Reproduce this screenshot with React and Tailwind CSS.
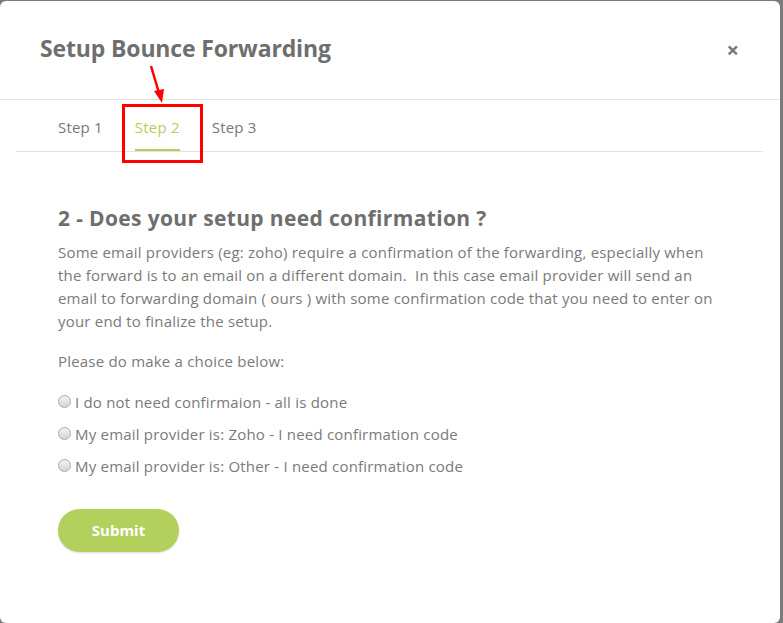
import React, { useState } from "react";

const options = [
  "I do not need confirmaion - all is done",
  "My email provider is: Zoho - I need confirmation code",
  "My email provider is: Other - I need confirmation code",
];

export default function App() {
  const [choice, setChoice] = useState(null);

  return (
    <div className="w-[783px] h-[623px] bg-[#7b7b7b] pt-[1px] pr-[3px] overflow-hidden" style={{ fontFamily: '"Open Sans", sans-serif' }}>
      <div className="relative w-[780px] h-[622px] bg-white rounded-md">
        {/* header */}
        <div className="h-[99px] flex items-center justify-between pl-[40px] pr-[41px] border-b border-[#e3e3e3]">
          <h2 className="text-[23px] font-bold text-[#6e6e6e] tracking-[-0.15px] mt-[-3px]">
            Setup Bounce Forwarding
          </h2>
          <button className="text-[22px] leading-none font-bold text-[#777] mt-[-2px]">×</button>
        </div>

        {/* tabs */}
        <div className="ml-[16px] mr-[17px] border-b border-[#e3e3e3] flex gap-[32px] pl-[42px] h-[52px]">
          <div className="flex items-center text-[15px] tracking-[0.2px] text-[#777] border-b-2 border-transparent pt-[5px]">Step 1</div>
          <div className="flex items-center text-[15px] tracking-[0.2px] text-[#b3cf5b] border-b-[2px] border-[#b3cf5b] pt-[5px]">Step 2</div>
          <div className="flex items-center text-[15px] tracking-[0.2px] text-[#777] border-b-2 border-transparent pt-[5px]">Step 3</div>
        </div>

        {/* body */}
        <div className="px-[58px] pt-[53px]">
          <h3 className="text-[21px] font-bold text-[#6e6e6e] leading-[26px] tracking-[0.35px]">
            2 - Does your setup need confirmation ?
          </h3>
          <p className="mt-[10px] text-[15px] leading-[23px] tracking-[0.2px] text-[#7a7a7a] max-w-[665px]">
            Some email providers (eg: zoho) require a confirmation of the forwarding, especially when the forward is to an email on a different domain.&nbsp; In this case email provider will send an email to forwarding domain ( ours ) with some confirmation code that you need to enter on your end to finalize the setup.
          </p>
          <p className="mt-[17px] text-[15px] leading-[23px] tracking-[0.2px] text-[#7a7a7a]">Please do make a choice below:</p>

          <div className="mt-[18px] flex flex-col gap-[9px]">
            {options.map((o, i) => (
              <label key={i} className="flex items-center gap-[4px] text-[15px] leading-[23px] tracking-[0.2px] text-[#7a7a7a] cursor-pointer" onClick={() => setChoice(i)}>
                <span className="w-[13px] h-[13px] rounded-full border border-[#a9a9a9] bg-gradient-to-b from-[#f4f4f4] to-[#d4d4d4] flex items-center justify-center mt-[-2px]">
                  {choice === i && <span className="w-[5px] h-[5px] rounded-full bg-[#444]" />}
                </span>
                {o}
              </label>
            ))}
          </div>

          <button className="mt-[31px] w-[121px] h-[43px] rounded-full bg-[#b3d05d] text-white text-[15px] font-bold shadow-[0_1px_2px_rgba(0,0,0,0.15)]">
            Submit
          </button>
        </div>

        {/* annotation */}
        <div className="absolute left-[122px] top-[103px] w-[81px] h-[59px] border-[3px] border-[#ff0000]" />
        <svg className="absolute left-[140px] top-[60px]" width="40" height="46" viewBox="0 0 40 46">
          <line x1="11" y1="5" x2="19" y2="32" stroke="#ff0000" strokeWidth="2.5" />
          <polygon points="14,30 24,28 22,42" fill="#ff0000" />
        </svg>
      </div>
    </div>
  );
}
